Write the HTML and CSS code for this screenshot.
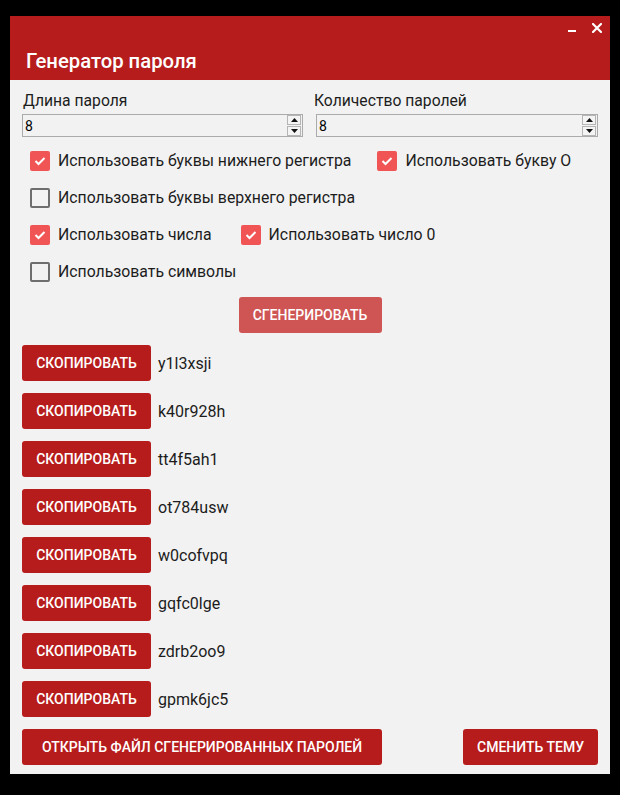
FILE: index.html
```html
<!DOCTYPE html>
<html lang="ru">
<head>
<meta charset="utf-8">
<title>Генератор пароля</title>
<link rel="stylesheet" href="styles.css">
</head>
<body>
<div class="window">
  <header class="titlebar">
    <div class="win-controls">
      <span class="win-btn"><svg width="9" height="9" viewBox="0 0 9 9"><rect x="0" y="7" width="8" height="2" fill="#fff"/></svg></span>
      <span class="win-btn"><svg width="10" height="10" viewBox="0 0 10 10"><path d="M1 1 L9 9 M9 1 L1 9" stroke="#fff" stroke-width="2.2" stroke-linecap="square"/></svg></span>
    </div>
    <h1 class="title">Генератор пароля</h1>
  </header>

  <main class="content">
    <div class="fields">
      <div class="field">
        <label class="field-label">Длина пароля</label>
        <div class="spin">
          <span class="spin-value">8</span>
          <span class="spin-btns">
            <span class="spin-btn"><svg width="7" height="4" viewBox="0 0 7 4"><path d="M0 4 L3.5 0 L7 4Z" fill="#111"/></svg></span>
            <span class="spin-btn"><svg width="7" height="4" viewBox="0 0 7 4"><path d="M0 0 L3.5 4 L7 0Z" fill="#111"/></svg></span>
          </span>
        </div>
      </div>
      <div class="field field-2">
        <label class="field-label">Количество паролей</label>
        <div class="spin">
          <span class="spin-value">8</span>
          <span class="spin-btns">
            <span class="spin-btn"><svg width="7" height="4" viewBox="0 0 7 4"><path d="M0 4 L3.5 0 L7 4Z" fill="#111"/></svg></span>
            <span class="spin-btn"><svg width="7" height="4" viewBox="0 0 7 4"><path d="M0 0 L3.5 4 L7 0Z" fill="#111"/></svg></span>
          </span>
        </div>
      </div>
    </div>

    <div class="checks">
      <div class="check-row row-a">
        <div class="check"><span class="box checked"><svg width="12" height="10" viewBox="0 0 12 10"><path d="M1.5 5 L4.5 8 L10.5 2" fill="none" stroke="#fff" stroke-width="2"/></svg></span><span class="check-text">Использовать буквы нижнего регистра</span></div>
        <div class="check"><span class="box checked"><svg width="12" height="10" viewBox="0 0 12 10"><path d="M1.5 5 L4.5 8 L10.5 2" fill="none" stroke="#fff" stroke-width="2"/></svg></span><span class="check-text">Использовать букву O</span></div>
      </div>
      <div class="check-row">
        <div class="check"><span class="box"></span><span class="check-text">Использовать буквы верхнего регистра</span></div>
      </div>
      <div class="check-row row-b">
        <div class="check"><span class="box checked"><svg width="12" height="10" viewBox="0 0 12 10"><path d="M1.5 5 L4.5 8 L10.5 2" fill="none" stroke="#fff" stroke-width="2"/></svg></span><span class="check-text">Использовать числа</span></div>
        <div class="check"><span class="box checked"><svg width="12" height="10" viewBox="0 0 12 10"><path d="M1.5 5 L4.5 8 L10.5 2" fill="none" stroke="#fff" stroke-width="2"/></svg></span><span class="check-text">Использовать число 0</span></div>
      </div>
      <div class="check-row">
        <div class="check"><span class="box"></span><span class="check-text">Использовать символы</span></div>
      </div>
    </div>

    <div class="gen-wrap"><button class="btn btn-gen">Сгенерировать</button></div>

    <ul class="passwords">
      <li class="pw-row"><button class="btn btn-copy">Скопировать</button><span class="pw">y1l3xsji</span></li>
      <li class="pw-row"><button class="btn btn-copy">Скопировать</button><span class="pw">k40r928h</span></li>
      <li class="pw-row"><button class="btn btn-copy">Скопировать</button><span class="pw">tt4f5ah1</span></li>
      <li class="pw-row"><button class="btn btn-copy">Скопировать</button><span class="pw">ot784usw</span></li>
      <li class="pw-row"><button class="btn btn-copy">Скопировать</button><span class="pw">w0cofvpq</span></li>
      <li class="pw-row"><button class="btn btn-copy">Скопировать</button><span class="pw">gqfc0lge</span></li>
      <li class="pw-row"><button class="btn btn-copy">Скопировать</button><span class="pw">zdrb2oo9</span></li>
      <li class="pw-row"><button class="btn btn-copy">Скопировать</button><span class="pw">gpmk6jc5</span></li>
    </ul>

    <div class="footer">
      <button class="btn btn-open">Открыть файл сгенерированных паролей</button>
      <button class="btn btn-theme">Сменить тему</button>
    </div>
  </main>
</div>
</body>
</html>
```

FILE: styles.css
```css
* { box-sizing: border-box; }
html, body { margin: 0; padding: 0; }
body {
  background: #000;
  width: 620px;
  height: 795px;
  overflow: hidden;
  font-family: Roboto, "Noto Sans", sans-serif;
  color: #1c1c1c;
}
.window {
  margin: 16px 0 0 10px;
  width: 600px;
  height: 758px;
  background: #f2f2f2;
  display: flex;
  flex-direction: column;
}
.titlebar {
  height: 64px;
  background: #b71c1c;
  color: #fff;
  display: flex;
  flex-direction: column;
}
.win-controls {
  display: flex;
  justify-content: flex-end;
  align-items: flex-start;
  gap: 14px;
  padding: 7px 8px 0 0;
  height: 20px;
}
.win-btn { display: flex; width: 10px; height: 10px; }
.title {
  margin: 0;
  padding: 13px 0 0 16px;
  font-size: 20.3px;
  font-weight: 500;
  line-height: 24px;
}
.content {
  padding: 11px 12px 0 12px;
  display: flex;
  flex-direction: column;
}
.fields {
  display: grid;
  grid-template-columns: 281px 282px;
  column-gap: 13px;
}
.field { display: flex; flex-direction: column; }
.field-label {
  font-size: 15.7px;
  line-height: 20px;
  padding-left: 1px;
}
.field-2 .field-label { margin-left: -3px; }
.spin {
  margin-top: 3px;
  height: 23px;
  border: 1px solid #ababab;
  display: flex;
  align-items: center;
  justify-content: space-between;
  padding: 0 1px 0 2px;
}
.spin-value { font-size: 14px; color: #000; }
.spin-btns { display: flex; flex-direction: column; gap: 1px; }
.spin-btn {
  width: 14px;
  height: 10px;
  border: 1px solid #b5b5b5;
  background: #f4f4f4;
  display: flex;
  align-items: center;
  justify-content: center;
}
.checks {
  margin-top: 14px;
  display: flex;
  flex-direction: column;
  gap: 17px;
}
.check-row {
  display: flex;
  padding-left: 8px;
  height: 20px;
}
.row-a { gap: 26px; }
.row-b { gap: 29px; }
.check { display: flex; align-items: center; gap: 8px; }
.box {
  width: 20px;
  height: 20px;
  border: 2px solid #6e6e6e;
  border-radius: 2px;
  display: flex;
  align-items: center;
  justify-content: center;
}
.box.checked { background: #f05454; border-color: #f05454; }
.check-text { font-size: 15.8px; line-height: 20px; }
.btn {
  font-family: Roboto, "Noto Sans", sans-serif;
  font-weight: 500;
  font-size: 14px;
  text-transform: uppercase;
  color: #fff;
  border: none;
  border-radius: 3px;
  height: 36px;
  padding: 0;
  background: #b71c1c;
}
.gen-wrap {
  margin-top: 15px;
  display: flex;
  justify-content: center;
}
.btn-gen { width: 143px; background: #cf5454; }
.passwords {
  list-style: none;
  margin: 12px 0 0 0;
  padding: 0;
  display: flex;
  flex-direction: column;
  gap: 12px;
}
.pw-row { display: flex; align-items: center; gap: 7px; }
.btn-copy { width: 129px; }
.pw { font-size: 16px; }
.footer {
  margin-top: 12px;
  display: flex;
  justify-content: space-between;
}
.btn-open { width: 360px; }
.btn-theme { width: 135px; }
```
